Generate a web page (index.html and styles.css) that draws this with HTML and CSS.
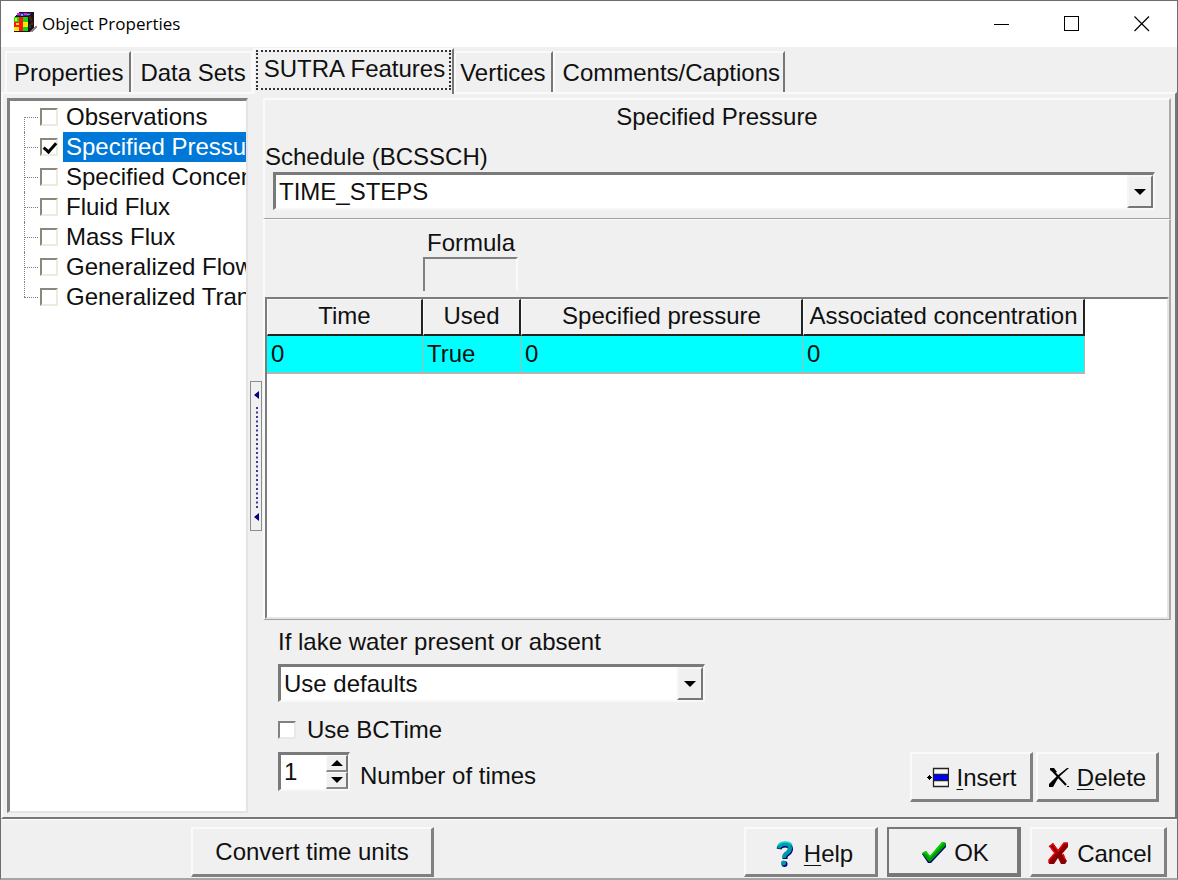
FILE: index.html
```html
<!DOCTYPE html>
<html lang="en">
<head>
<meta charset="utf-8">
<title>Object Properties</title>
<link rel="stylesheet" href="styles.css">
</head>
<body>
<div class="window">
  <header class="titlebar">
    <svg class="app-icon" width="24" height="22" viewBox="0 0 24 22" shape-rendering="crispEdges" aria-hidden="true">
      <path d="M0 5 5 0H20V17L15 20H0Z" fill="#201018"/>
      <path d="M2 4 5 1H18L14 4Z" fill="#6a12b0"/>
      <path d="M3 1h3v2H3zM10 1h3v2h-3z" fill="#e020e0"/>
      <path d="M7 2h2v2H7zM13 2h3v1h-3z" fill="#20c8e8"/>
      <path d="M0 5h5v5H0zM9 5h5v5H9zM9 15h5v4H9z" fill="#10d818"/>
      <path d="M5 5h4v5H5zM5 10h4v5H5zM0 10h5v5H0z" fill="#ff1808"/>
      <path d="M1 6h2v3H1zM9 10h5v5H9zM0 15h5v4H0zM2 11h3v2H2z" fill="#ffe808"/>
      <path d="M5 15h4v4H5z" fill="#ff1808"/>
      <path d="M15 4h2v3h-2zM17 10h2v3h-2z" fill="#801010"/>
      <path d="M16 6h2v3h-2zM15 12h2v4h-2z" fill="#104020"/>
      <path d="M16 20 22 13 23 15 18 20Z" fill="#8a8a8a"/>
    </svg>
    <h1 class="title">Object Properties</h1>
    <div class="window-controls">
      <button class="win-btn" aria-label="Minimize"><svg width="16" height="16" viewBox="0 0 16 16" shape-rendering="crispEdges"><path d="M0 8.500H15" stroke="#000"/></svg></button>
      <button class="win-btn" aria-label="Maximize"><svg width="16" height="16" viewBox="0 0 16 16" shape-rendering="crispEdges"><path d="M.5.500H14.500V14.500H.5Z" fill="none" stroke="#000"/></svg></button>
      <button class="win-btn" aria-label="Close"><svg width="16" height="16" viewBox="0 0 16 16"><path d="M.5.500 15 15M15 .5.500 15" stroke="#000" stroke-width="1.200"/></svg></button>
    </div>
  </header>

  <nav class="tabs" role="tablist">
    <button class="tab" role="tab">Properties</button>
    <button class="tab before-active" role="tab">Data Sets</button>
    <button class="tab active" role="tab" aria-selected="true"><span class="focus">SUTRA Features</span></button>
    <button class="tab after-active" role="tab">Vertices</button>
    <button class="tab last" role="tab">Comments/Captions</button>
  </nav>

  <main class="page">
    <ul class="tree">
      <li class="node"><label><input class="tree-check" type="checkbox"><span class="name">Observations</span></label></li>
      <li class="node selected"><label><input class="tree-check" type="checkbox" checked><span class="name">Specified Pressure</span></label></li>
      <li class="node"><label><input class="tree-check" type="checkbox"><span class="name">Specified Concentration</span></label></li>
      <li class="node"><label><input class="tree-check" type="checkbox"><span class="name">Fluid Flux</span></label></li>
      <li class="node"><label><input class="tree-check" type="checkbox"><span class="name">Mass Flux</span></label></li>
      <li class="node"><label><input class="tree-check" type="checkbox"><span class="name">Generalized Flow</span></label></li>
      <li class="node"><label><input class="tree-check" type="checkbox"><span class="name">Generalized Transport</span></label></li>
    </ul>

    <button class="splitter" aria-label="Collapse the feature list">
      <svg width="8" height="148" viewBox="0 0 8 148" aria-hidden="true">
        <path d="M7 9V17L2 13ZM7 131V139L2 135Z" fill="#000080"/>
        <path d="M5 25V128" stroke="#3a3a9a" stroke-width="2" stroke-dasharray="2 2.500"/>
      </svg>
    </button>

    <div class="detail">
      <section class="panel schedule">
        <h2 class="heading">Specified Pressure</h2>
        <label class="schedule-label" for="schedule">Schedule (BCSSCH)</label>
        <div class="combo schedule-combo">
          <select id="schedule"><option>TIME_STEPS</option></select>
          <span class="drop"><svg width="12" height="6" viewBox="0 0 12 6"><path d="M0 0H12L6 6Z"/></svg></span>
        </div>
      </section>

      <section class="panel values">
        <div class="formula">
          <label for="formula">Formula</label>
          <input id="formula" type="text" disabled>
        </div>
        <div class="grid">
          <table>
            <thead><tr><th class="c-time">Time</th><th class="c-used">Used</th><th class="c-value">Specified pressure</th><th class="c-value">Associated concentration</th></tr></thead>
            <tbody><tr><td>0</td><td>True</td><td>0</td><td>0</td></tr></tbody>
          </table>
        </div>
      </section>

      <section class="options">
        <label for="lake">If lake water present or absent</label>
        <div class="combo lake-combo">
          <select id="lake"><option>Use defaults</option></select>
          <span class="drop"><svg width="12" height="6" viewBox="0 0 12 6"><path d="M0 0H12L6 6Z"/></svg></span>
        </div>
        <label class="bctime"><input class="check" type="checkbox">Use BCTime</label>
        <div class="times-row">
          <div class="spin">
            <input id="times" type="number" value="1">
            <div class="spin-buttons">
              <button aria-label="Increase"><svg width="12" height="6" viewBox="0 0 12 6"><path d="M0 6H12L6 0Z"/></svg></button>
              <button aria-label="Decrease"><svg width="12" height="6" viewBox="0 0 12 6"><path d="M0 0H12L6 6Z"/></svg></button>
            </div>
          </div>
          <label class="times-label" for="times">Number of times</label>
          <div class="row-actions">
            <button class="btn edit-btn">
              <svg width="24" height="22" viewBox="0 0 24 22" aria-hidden="true"><path d="M2 10h1V9h1V8h1v1h1v1h1v1H6v1H5v1H4v-1H3v-1H2Z" fill="#000"/><path d="M8.500 1.500h15v18h-15ZM8.500 7.500h15M8.500 13.500h15" fill="#f8f8f8" stroke="#222" stroke-width="1.300"/><path d="M9 8h14v5H9z" fill="#0000f8"/></svg>
              <span><u>I</u>nsert</span>
            </button>
            <button class="btn edit-btn">
              <svg width="22" height="22" viewBox="0 0 22 22" aria-hidden="true"><path d="M3 2 18 18" stroke="#000" stroke-width="2"/><path d="M2 1h4l3 4-2 1-5-3zM21 1 12 9 9 13 5 20 1 20 1 17 9 9 19 1Z" fill="#000"/><path d="M19 19.500h2" stroke="#000"/></svg>
              <span><u>D</u>elete</span>
            </button>
          </div>
        </div>
      </section>
    </div>
  </main>

  <footer class="footer">
    <button class="btn convert">Convert time units</button>
    <div class="dialog-actions">
      <button class="btn help">
        <svg width="18" height="26" viewBox="0 0 18 26" aria-hidden="true"><path d="M3 8Q4 4 9.500 4 14.500 4 14.500 8 14.500 11 11 13 9 14 9 18" fill="none" stroke="#000080" stroke-width="5"/><circle cx="8.500" cy="23" r="3" fill="#000080"/><path d="M2.500 7Q4 3 9.500 3 14 3 14 7 14 10 11 12 8 13.500 8 17" fill="none" stroke="#009aa4" stroke-width="4"/><circle cx="7.500" cy="22" r="2.500" fill="#009aa4"/><path d="M2 4Q5 1 9 1 14 1 16 4" fill="none" stroke="#00d8e0" stroke-width="1.500"/></svg>
        <span><u>H</u>elp</span>
      </button>
      <button class="btn ok">
        <svg width="26" height="24" viewBox="0 0 26 24" aria-hidden="true"><path d="M1 13 5 11 9 16 21 2 25 3V6L10 22 7 22Z" fill="#000080"/><path d="M1 12 5 10 9 15 21 1 25 2V4L9 21 7 20Z" fill="#009a00"/><path d="M1 12 5 10 9 15 21 1 24 1 9 17 5 13Z" fill="#00d400"/></svg>
        <span>OK</span>
      </button>
      <button class="btn cancel">
        <svg width="22" height="24" viewBox="0 0 22 24" aria-hidden="true"><path d="M1 4 5 1 10 8 16 1 20 1V5L14 12 19 19 17 22H13L10 16 6 22H1V18L7 11Z" fill="#8a0000"/><path d="M1 5 5 2 10 9 16 1H20M1 21V18L7 11 3 6M15 12 17 17" fill="none" stroke="#f00010" stroke-width="1.500"/></svg>
        <span>Cancel</span>
      </button>
    </div>
  </footer>
</div>
</body>
</html>
```
FILE: styles.css
```css
* { box-sizing: border-box; }

body {
  margin: 0;
  background: #f0f0f0;
  color: #101010;
  font: 24px/28px "Liberation Sans", Arial, sans-serif;
}

button, input, select { font: inherit; color: inherit; border-radius: 0; }
button { padding: 0; background: #f0f0f0; border: 0; white-space: nowrap; }
svg { display: block; flex: none; }

.window {
  display: flex;
  flex-direction: column;
  min-height: 100vh;
  border: 1px solid #6e6e6e;
  border-bottom: 2px solid #a6a6a6;
}

/* Title bar */
.titlebar {
  display: flex;
  align-items: center;
  height: 46px;
  padding-left: 13px;
  background: #fff;
}
.app-icon { margin-bottom: 2px; }
.title {
  flex: 1;
  margin: 0 0 0 4px;
  color: #000;
  font: 17px/24px "Open Sans", "Noto Sans", sans-serif;
}
.window-controls { display: flex; }
.win-btn {
  display: grid;
  place-items: center;
  width: 70px;
  height: 46px;
  background: #fff;
}

/* Tabs */
.tabs { display: flex; align-items: flex-end; height: 45px; padding-left: 4px; }
.tab {
  height: 41px;
  padding: 0 6px 0 7px;
  border-top: 2px solid #fafafa;
  border-left: 2px solid #fafafa;
  border-right: 2px solid #777;
}
.before-active { padding-right: 5px; border-right-color: #fafafa; }
.after-active { padding: 0 5px 0 4px; }
.last { padding: 0 3px 0 8px; }
.active {
  position: relative;
  height: 46px;
  margin-bottom: -2px;
  padding: 0 1px 4px;
}
.focus { display: block; height: 40px; padding: 3px 4px 5px 6px; border: 2px dotted #333; }

/* Tab page */
.page {
  display: flex;
  flex: 1;
  padding: 4px;
  border: 2px solid #fafafa;
  border-right-color: #777;
  border-bottom-color: #777;
}

.tree {
  flex: none;
  width: 241px;
  margin: 0;
  padding: 1px 0 0;
  overflow: hidden;
  list-style: none;
  background: #fff;
  border: 3px solid #808080;
  border-right: 2px solid #e4e4e4;
  border-bottom: 2px solid #e4e4e4;
}
.node { position: relative; height: 30px; padding-left: 30px; }
.node label { display: flex; align-items: center; height: 30px; }
.node::before {
  content: "";
  position: absolute;
  left: 14px;
  top: 0;
  height: 100%;
  border-left: 1px dotted #808080;
}
.node::after {
  content: "";
  position: absolute;
  left: 14px;
  top: 15px;
  width: 14px;
  border-top: 1px dotted #808080;
}
.node:first-child::before { top: 15px; height: 15px; }
.node:last-child::before { height: 15px; }
.name { flex: 1; margin-left: 5px; padding-left: 3px; line-height: 30px; white-space: nowrap; overflow: hidden; }
.selected .name { color: #fff; background: #0078d7; }

.tree-check, .check {
  flex: none;
  appearance: none;
  width: 18px;
  height: 18px;
  margin: 0;
  background: #fff;
  border: 2px solid #808080;
  border-right-color: #e8e8e8;
  border-bottom-color: #e8e8e8;
}
.tree-check { position: relative; border-color: #8a887a #eeeade #eeeade #8a887a; }
.tree-check:checked::after {
  content: "";
  position: absolute;
  left: 4px;
  top: 0;
  width: 5px;
  height: 10px;
  border: solid #000;
  border-width: 0 3px 3px 0;
  transform: rotate(42deg);
}

.splitter {
  display: grid;
  place-items: center;
  align-self: center;
  width: 12px;
  height: 150px;
  margin: 0 1px 0 2px;
  border: 1px solid #8c8c8c;
}

.detail { display: flex; flex: 1; flex-direction: column; min-width: 0; }
.panel {
  border: 2px solid #fafafa;
  border-right-color: #aaa;
  border-bottom: 1px solid #a0a0a0;
}

/* Schedule */
.heading { margin: 3px 0 12px; font-size: 24px; font-weight: 400; text-align: center; }
.schedule-label { display: block; }
.combo {
  display: flex;
  height: 38px;
  background: #fff;
  border: 3px solid #7a7a7a;
  border-right: 2px solid #f8f8f8;
  border-bottom: 2px solid #f8f8f8;
  position: relative;
}
.combo select {
  appearance: none;
  flex: 1;
  min-width: 0;
  padding: 0 28px 0 3px;
  background: transparent;
  border: 0;
}
.drop {
  position: absolute;
  top: 0;
  right: 0;
  bottom: 0;
  display: grid;
  place-items: center;
  width: 26px;
  pointer-events: none;
  background: #f0f0f0;
  border: 2px solid #f6f6f6;
  border-right-color: #777;
  border-bottom-color: #777;
}
.schedule-combo { margin: 1px 14px 8px 8px; }

/* Values */
.values { display: flex; flex: 1; flex-direction: column; border-top-width: 1px; }
.formula { display: flex; flex-direction: column; width: 95px; margin: 9px 0 6px 158px; }
.formula label { padding-left: 4px; }
.formula input {
  width: 95px;
  height: 34px;
  background: #f0f0f0;
  border: 2px solid #808080;
  border-right-color: #fafafa;
  border-bottom: 0;
}
.grid {
  flex: 1;
  overflow: hidden;
  background: #fff;
  border: 2px solid #7c7c7c;
  border-right: 2px solid #e6e6e6;
  border-bottom: 2px solid #e6e6e6;
}
.grid table { table-layout: fixed; width: 818px; border-spacing: 0; }
.grid th {
  height: 37px;
  padding: 0 0 2px;
  font-weight: 400;
  background: #f0f0f0;
  border: 1px solid #fafafa;
  border-right: 2px solid #222;
  border-bottom: 2px solid #222;
}
.grid td {
  height: 38px;
  padding: 0 4px;
  background: #0ff;
  border-right: 1px solid #b4b4b4;
  border-bottom: 2px solid #b4b4b4;
}
.c-time { width: 156px; }
.c-used { width: 98px; }
.c-value { width: 282px; }

/* Options */
.options { display: flex; flex-direction: column; align-items: flex-start; padding: 8px 12px 11px 15px; }
.lake-combo { width: 427px; margin-top: 8px; }
.bctime { display: flex; align-items: center; gap: 11px; margin: 14px 0 8px; }
.times-row { display: flex; align-items: flex-start; align-self: stretch; }
.spin {
  display: flex;
  width: 72px;
  height: 39px;
  background: #fff;
  border: 3px solid #7a7a7a;
  border-right: 2px solid #f8f8f8;
  border-bottom: 2px solid #f8f8f8;
}
.spin input {
  appearance: textfield;
  flex: 1;
  min-width: 0;
  padding: 0 0 0 3px;
  background: transparent;
  border: 0;
}
.spin input::-webkit-inner-spin-button { appearance: none; margin: 0; }
.spin-buttons { display: grid; width: 22px; }
.spin-buttons button {
  display: grid;
  place-items: center;
  border: 1px solid #fafafa;
  border-right: 2px solid #777;
  border-bottom: 2px solid #8a8a8a;
}
.times-label { margin: 10px 0 0 10px; }
.row-actions { display: flex; gap: 3px; margin-left: auto; }

.btn {
  display: flex;
  align-items: center;
  justify-content: center;
  gap: 7px;
  height: 50px;
  border: 2px solid #fafafa;
  border-right: 3px solid #808080;
  border-bottom: 3px solid #808080;
}
.btn u { text-decoration-thickness: 1px; text-underline-offset: 3px; }
.edit-btn { width: 123px; padding-top: 2px; }

/* Footer */
.footer {
  display: flex;
  justify-content: space-between;
  padding: 7px 10px 1px 190px;
  border-top: 1px solid #fff;
}
.dialog-actions { display: flex; gap: 9px; }
.dialog-actions .btn { padding: 4px 0 0 4px; }
.convert { width: 243px; }
.help, .ok { width: 134px; }
.dialog-actions .help { gap: 10px; padding-left: 8px; }
.ok { border: 2px solid #777; border-right: 4px solid #777; border-bottom: 4px solid #777; }
.cancel { width: 137px; }
```
